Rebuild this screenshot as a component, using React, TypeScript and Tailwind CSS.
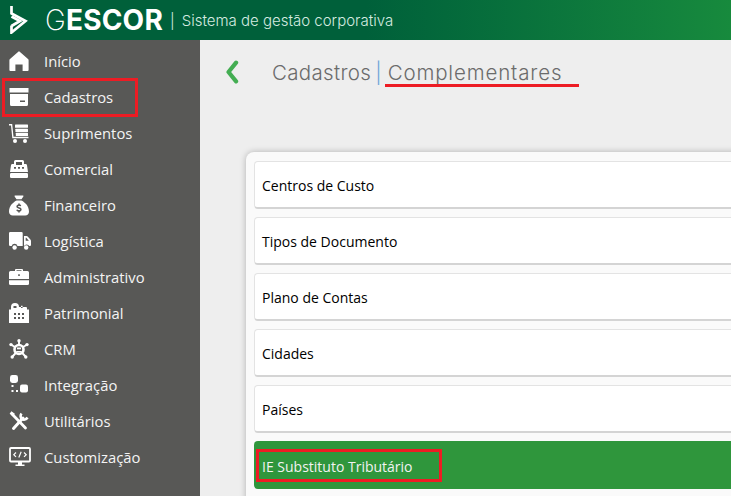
import React from 'react';
import { FaSackDollar } from 'react-icons/fa6';

const HomeIcon = () => (
  <svg viewBox="0 0 20 20" className="w-5 h-5" fill="white">
    <path d="M10 0.5c.4 0 .8.2 1 .4L19 8c.4.4.6.8.6 1.3V19a1 1 0 0 1-1 1h-5V13.5H6.400V20h-5a1 1 0 0 1-1-1V9.300C.4 8.800.6 8.400 1 8L9 .9c.2-.2.6-.4 1-.4z" />
  </svg>
);

const ArchiveIcon = () => (
  <svg viewBox="0 0 20 20" className="w-5 h-5" fill="white">
    <rect x="0.500" y="1" width="19" height="4.500" />
    <path fillRule="evenodd" d="M1 7h18v10.500a1.500 1.500 0 0 1-1.500 1.500h-15A1.500 1.500 0 0 1 1 17.500zM11 13.500V15h5v-1.500z" />
  </svg>
);

const CartIcon = () => (
  <svg viewBox="0 0 20 20" className="w-5 h-5" fill="white">
    <path d="M0 1h3.200l1.300 12.800H19.500v1.400H3.300L2 2.400H0z" />
    <rect x="6" y="1.500" width="13" height="3.200" rx="0.500" />
    <rect x="6.400" y="5.700" width="12.600" height="3.200" rx="0.500" />
    <rect x="6.800" y="9.800" width="12.200" height="3.200" rx="0.500" />
    <circle cx="6" cy="18" r="2" />
    <circle cx="16" cy="18" r="2" />
  </svg>
);

const RegisterIcon = () => (
  <svg viewBox="0 0 20 18" className="w-5 h-[18px]" fill="white">
    <path fillRule="evenodd" d="M6.500 0h7A1.500 1.500 0 0 1 15 1.500V4h1.500c.8 0 1.300.5 1.500 1.200L19 12H1L2 5.200C2.200 4.500 2.700 4 3.500 4H5V1.500A1.500 1.500 0 0 1 6.500 0zM7 2v3h6V2zM5 7v1.800h2V7zM9 7v1.800h2V7zM13 7v1.800h2V7z" />
    <rect x="1" y="13" width="18" height="5" rx="1.200" />
  </svg>
);

const TruckIcon = () => (
  <svg viewBox="0 0 22 18" className="w-[22px] h-[18px]" fill="white">
    <path d="M1.200 0h11.300a1.200 1.200 0 0 1 1.200 1.200V14H8.500a3 3 0 0 0-5.800 0H1.200A1.200 1.200 0 0 1 0 12.800V1.200A1.200 1.200 0 0 1 1.200 0z" />
    <path fillRule="evenodd" d="M15 4h2.500c.5 0 .9.200 1.200.5l2.700 3c.4.400.6.900.6 1.400V13a1 1 0 0 1-1 1h-.700a3 3 0 0 0-5.300 0zM16.700 5.700v3h3.200l-2.600-3z" />
    <circle cx="5.600" cy="15.500" r="2.200" />
    <circle cx="17.200" cy="15.500" r="2.200" />
  </svg>
);

const BriefcaseIcon = () => (
  <svg viewBox="0 0 20 16" className="w-5 h-4" fill="white">
    <path fillRule="evenodd" d="M6 2V1a1 1 0 0 1 1-1h6a1 1 0 0 1 1 1v1h4.500A1.500 1.500 0 0 1 20 3.500V10H0V3.500A1.500 1.500 0 0 1 1.500 2zM7.500 1.200V2h5v-.8zM9.200 5.200V7h1.600V5.200z" />
    <path d="M0 11.200h20v3.300A1.500 1.500 0 0 1 18.500 16h-17A1.500 1.500 0 0 1 0 14.500z" />
  </svg>
);

const BuildingIcon = () => (
  <svg viewBox="0 0 20 20" className="w-5 h-5" fill="white">
    <path fillRule="evenodd" d="M0 20V6.500h2V4a4 4 0 0 1 8 0h7a1 1 0 0 1 1 1v1.500h2V20zM4.500 3v2h3V3zM12 2.800V5h1.600V2.800zM5 10v2h2v-2zM9 10v2h2v-2zM13 10v2h2v-2zM5 14v2h2v-2zM9 14v2h2v-2zM13 14v2h2v-2z" />
  </svg>
);

const CrmIcon = () => (
  <svg viewBox="0 0 20 20" className="w-5 h-5" fill="none">
    <path d="M10 2v5M2.500 6l4.500 2.500M17.500 6 13 8.500M3.500 17.500l3.700-4M16.500 17.500l-3.700-4" stroke="white" strokeWidth="1.900" />
    <circle cx="10" cy="10.500" r="4.500" stroke="white" strokeWidth="2.600" />
    <rect x="8" y="8.500" width="4" height="1.800" fill="white" />
    <rect x="7.200" y="12" width="5.600" height="1.500" fill="white" />
    <circle cx="10" cy="1.800" r="1.700" fill="white" />
    <circle cx="2" cy="5.600" r="1.700" fill="white" />
    <circle cx="18" cy="5.600" r="1.700" fill="white" />
    <circle cx="3.200" cy="18" r="1.700" fill="white" />
    <circle cx="16.800" cy="18" r="1.700" fill="white" />
  </svg>
);

const IntegracaoIcon = () => (
  <svg viewBox="0 0 20 20" className="w-5 h-5" fill="white">
    <rect x="1" y="0" width="8" height="8" rx="2.400" />
    <rect x="11" y="9.500" width="8" height="8" rx="2" />
    <rect x="2.500" y="10" width="2" height="2" />
    <rect x="2.500" y="15" width="2" height="2" />
    <rect x="7" y="15" width="2" height="2" />
  </svg>
);

const ToolsIcon = () => (
  <svg viewBox="0 0 20 20" className="w-5 h-5" fill="none" stroke="white">
    <path d="M4.500 17.500 14 7" strokeWidth="3" strokeLinecap="round" />
    <path d="M12.500 2.500c-1.500 2-1 4.500.5 5.500s4 1 5.500-1.500" strokeWidth="2.600" />
    <path d="M3 3l13.500 14" strokeWidth="2.800" strokeLinecap="round" />
    <path d="M1.500 1.500 5 4" strokeWidth="3" />
  </svg>
);

const MonitorIcon = () => (
  <svg viewBox="0 0 22 20" className="w-[22px] h-5" fill="none">
    <rect x="1" y="1" width="20" height="13.500" rx="1" stroke="white" strokeWidth="1.800" />
    <path d="M7 5.500 4.800 7.700 7 9.900M15 5.500l2.200 2.200L15 9.900M12.200 4.800 9.800 10.600" stroke="white" strokeWidth="1.200" />
    <path d="M9 15h4v2.400h2.500v1.600h-9v-1.600H9z" fill="white" />
  </svg>
);

const LogoIcon = () => (
  <svg viewBox="0 0 18 28" className="w-[18px] h-7" fill="none" stroke="white" strokeWidth="2.700" strokeLinejoin="miter">
    <path d="M1.500 0V7.500L15.500 15 1.500 26.500V19.500" />
    <path d="M1.500 10.500 10 15 1.500 20" />
  </svg>
);

const menuItems: { label: string; icon: React.ReactNode }[] = [
  { label: 'Início', icon: <HomeIcon /> },
  { label: 'Cadastros', icon: <ArchiveIcon /> },
  { label: 'Suprimentos', icon: <CartIcon /> },
  { label: 'Comercial', icon: <RegisterIcon /> },
  { label: 'Financeiro', icon: <FaSackDollar className="w-5 h-[21px]" /> },
  { label: 'Logística', icon: <TruckIcon /> },
  { label: 'Administrativo', icon: <BriefcaseIcon /> },
  { label: 'Patrimonial', icon: <BuildingIcon /> },
  { label: 'CRM', icon: <CrmIcon /> },
  { label: 'Integração', icon: <IntegracaoIcon /> },
  { label: 'Utilitários', icon: <ToolsIcon /> },
  { label: 'Customização', icon: <MonitorIcon /> },
];

const listItems = ['Centros de Custo', 'Tipos de Documento', 'Plano de Contas', 'Cidades', 'Países'];

const App: React.FC = () => {
  return (
    <div className="relative w-[731px] h-[496px] overflow-hidden flex flex-col bg-[#eeeeee] font-['Open_Sans','Noto_Sans',sans-serif]">
      {/* Topo */}
      <header className="h-10 shrink-0 flex items-center pl-[10px] bg-gradient-to-r from-[#00603a] via-[#00603a] to-[#178a3d] text-white">
        <LogoIcon />
        <span className="ml-[17px] text-[28px] leading-none tracking-[0.2px] font-['Inter',sans-serif]">
          <span className="font-extralight">G</span>
          <span className="font-bold">ESCOR</span>
        </span>
        <span className="ml-[7px] pt-[3px] text-[15px] font-light text-[#d5ebe0] font-['Inter',sans-serif] whitespace-nowrap">
          <span className="mr-[7px]">|</span>Sistema de gestão corporativa
        </span>
      </header>

      <div className="flex flex-1 min-h-0">
        {/* Menu lateral */}
        <aside className="w-[200px] shrink-0 bg-[#585856] pt-[3px] text-white">
          {menuItems.map((item) => (
            <div key={item.label} className="h-9 flex items-center">
              <div className="w-11 pl-[10px] shrink-0 flex items-center -translate-x-px">{item.icon}</div>
              <span className="pt-px text-[14.8px] text-[#f4f4f4]">{item.label}</span>
            </div>
          ))}
        </aside>

        {/* Conteudo */}
        <main className="flex-1 min-w-0 overflow-hidden">
          <div className="h-[112px] pt-[20px] flex items-start">
            <svg viewBox="0 0 12 20" className="ml-[25px] w-[14px] h-6" fill="none" stroke="#43ad52" strokeWidth="3.600" strokeLinecap="round" strokeLinejoin="round">
              <path d="M9.500 2 3 10l6.500 8" />
            </svg>
            <h1 className="ml-[33px] text-[20.5px] leading-[26px] font-light text-[#6b6b6b] font-['Inter',sans-serif] whitespace-nowrap">
              <span className="tracking-[0.33px]">Cadastros</span>
              <span className="ml-[4px] text-[#6aa5d8]">|</span>
              <span className="ml-[6px] tracking-[0.85px]">Complementares</span>
            </h1>
          </div>

          <div className="ml-[46px] w-[600px] rounded-tl-lg bg-[#fafafa] shadow-[0_0_6px_rgba(0,0,0,0.25)] pl-2 pt-[9px] flex flex-col gap-2 h-[400px]">
            {listItems.map((label) => (
              <div key={label} className="h-12 shrink-0 flex items-center pl-[7px] pt-0.5 bg-white border border-[#e3e3e3] border-b-[#d4d4d4] border-b-2 rounded text-[14px] text-black">
                {label}
              </div>
            ))}
            <div className="h-12 shrink-0 flex items-center pl-2 pt-0.5 bg-[#2f963c] rounded text-[14px] text-[#f2f2f2]">
              IE Substituto Tributário
            </div>
          </div>
        </main>
      </div>

      {/* Marcacoes vermelhas */}
      <div className="absolute left-[2px] top-[78px] w-[136px] h-[39px] border-[3px] border-[#ed1c24]" />
      <div className="absolute left-[385px] top-[84px] w-[194px] h-[3px] bg-[#ed1c24]" />
      <div className="absolute left-[256px] top-[449px] w-[186px] h-[33px] border-[3px] border-[#ed1c24]" />
    </div>
  );
};

export default App;
